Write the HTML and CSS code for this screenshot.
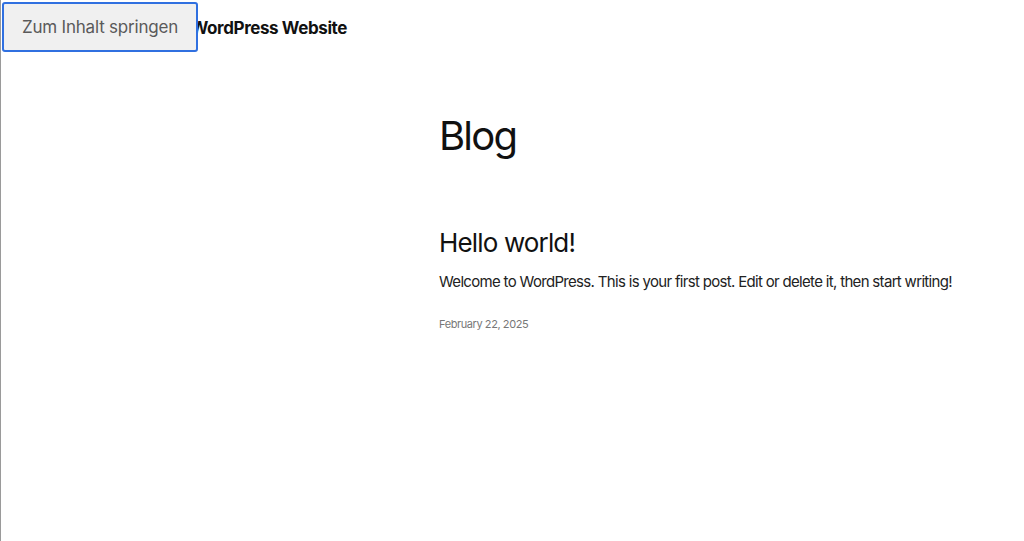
FILE: index.html
```html
<!DOCTYPE html>
<html lang="de">
<head>
<meta charset="utf-8">
<title>Blog – WordPress Website</title>
<link rel="stylesheet" href="styles.css">
</head>
<body>
<div class="page">
  <a class="skip-link" href="#content">Zum Inhalt springen</a>
  <header class="site-header">
    <a class="site-title" href="#">Meine WordPress Website</a>
  </header>
  <main class="main" id="content">
    <h1 class="page-title">Blog</h1>
    <article class="post">
      <h2 class="post-title">Hello world!</h2>
      <p class="post-excerpt">Welcome to WordPress. This is your first post. Edit or delete it, then start writing!</p>
      <div class="post-date">February 22, 2025</div>
    </article>
  </main>
</div>
</body>
</html>
```
FILE: styles.css
```css
html, body {
  margin: 0;
  padding: 0;
  background: #ffffff;
}
body {
  font-family: Inter, "Noto Sans", sans-serif;
  color: #111111;
}
.page {
  position: relative;
  min-height: 541px;
  border-left: 1px solid #9a9a9a;
  box-sizing: border-box;
}
.skip-link {
  position: absolute;
  left: 1px;
  top: 2px;
  width: 196px;
  height: 50px;
  box-sizing: border-box;
  border: 2px solid #3070e0;
  border-radius: 3px;
  background: #f0f0f0;
  color: #5a5a5a;
  font-size: 17px;
  font-weight: 400;
  letter-spacing: -0.2px;
  text-decoration: none;
  display: flex;
  align-items: center;
  justify-content: center;
  z-index: 10;
}
.site-header {
  height: 56px;
  display: flex;
  align-items: center;
  justify-content: flex-end;
  width: 346px;
}
.site-title {
  font-size: 17px;
  font-weight: 700;
  color: #111111;
  text-decoration: none;
  letter-spacing: -0.4px;
}
.main {
  padding-left: 438px;
  padding-top: 56px;
}
.page-title {
  margin: 0;
  font-size: 40px;
  font-weight: 400;
  line-height: 48px;
  letter-spacing: -1.8px;
}
.post {
  margin-top: 67px;
}
.post-title {
  margin: 0;
  font-size: 26px;
  font-weight: 400;
  line-height: 32px;
  letter-spacing: -0.85px;
}
.post-excerpt {
  margin: 12px 0 0;
  font-size: 15px;
  line-height: 22px;
  color: #222222;
  letter-spacing: -0.68px;
}
.post-date {
  margin-top: 23px;
  font-size: 11px;
  line-height: 16px;
  color: #777777;
  letter-spacing: -0.42px;
}
```
